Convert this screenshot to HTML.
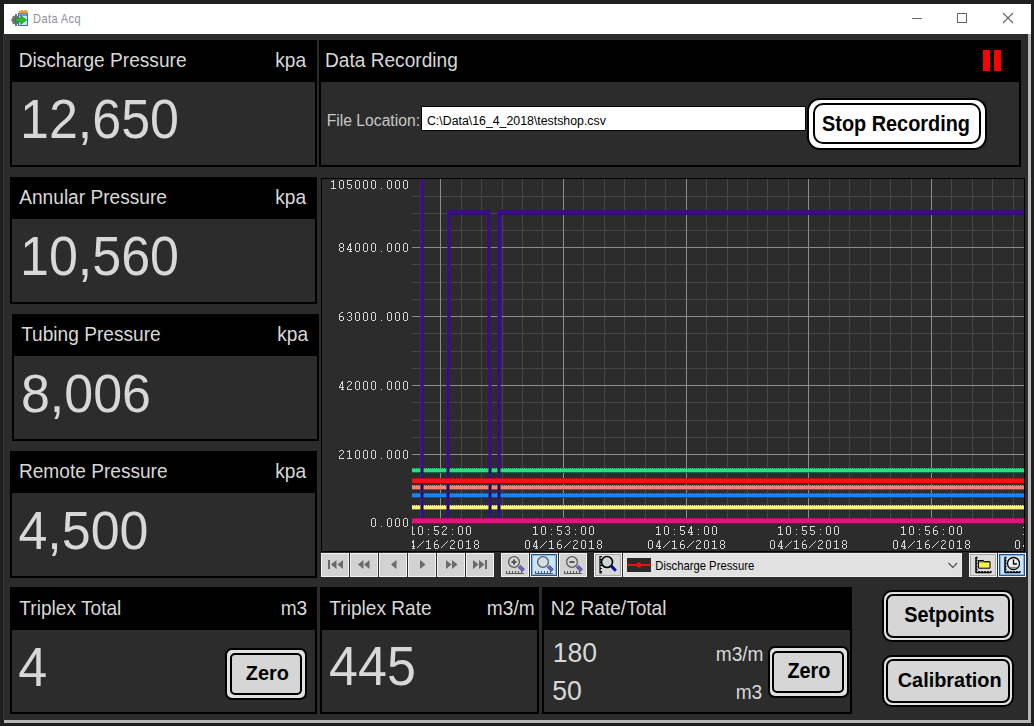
<!DOCTYPE html>
<html><head><meta charset="utf-8"><style>
html,body{margin:0;padding:0;width:1034px;height:726px;overflow:hidden;background:#1f1f1f}
.r{position:absolute;box-sizing:content-box}
.t{position:absolute;white-space:nowrap;font-family:'Liberation Sans', sans-serif}
</style></head><body>
<div class="r" style="left:0px;top:0px;width:1034px;height:726px;background:#1f1f1f;"></div>
<div class="r" style="left:4px;top:4px;width:1027px;height:30px;background:#ffffff;"></div>
<div class="r" style="left:4px;top:34px;width:1024px;height:686px;background:#2b2b2b;"></div>
<div class="r" style="left:1028px;top:34px;width:3px;height:689px;background:#b6b6b6;"></div>
<div class="r" style="left:4px;top:720px;width:1027px;height:3px;background:#b6b6b6;"></div>
<div class="r" style="left:0px;top:0px;width:3px;height:726px;background:#1e1e1e;"></div>
<div class="r" style="left:2px;top:34px;width:1px;height:692px;background:#1a1a1a;"></div>
<div class="r" style="left:3px;top:34px;width:1px;height:686px;background:#373737;"></div>
<div class="t" style="left:33.10px;top:14.09px;font-size:11.000px;line-height:11.000px;color:#8e8e9a;font-weight:normal;font-family:'Liberation Sans', sans-serif;letter-spacing:0.4px;transform:scaleY(1.0800);transform-origin:0 9.314px;">Data Acq</div>
<svg class="r" style="left:0px;top:0px" width="34" height="34" viewBox="0 0 34 34">
<g fill="#727272"><circle cx="16" cy="20" r="4.3"/><rect x="15" y="14" width="2" height="12"/><rect x="11.5" y="19" width="9" height="2"/><path d="M12.2 16.8l1.4-1.4 5.6 5.6-1.4 1.4z M12.2 23.2l1.4 1.4 5.6-5.6-1.4-1.4z"/></g>
<rect x="18.5" y="13.5" width="9" height="12" fill="#c4e4f6" stroke="#3a6cc0" stroke-width="1"/>
<rect x="19" y="14" width="8" height="2" fill="#6a9ad8"/>
<path d="M19 21h8M23 16v9" stroke="#ffffff" stroke-width="0.8"/>
<path d="M19 13.5V11h2v-1h2.2v1h1.3v-1h2.2v1h1v2.5z" fill="#e8a028"/>
<path d="M15.5 18.3h5.3v-2.6l5.7 4.3-5.7 4.3v-2.6h-5.3z" fill="#22c422" stroke="#108010" stroke-width="0.7"/>
</svg>
<div class="r" style="left:912px;top:18px;width:10px;height:1px;background:#666666;"></div>
<div class="r" style="left:957px;top:13px;width:8px;height:8px;border:1px solid #666"></div>
<svg class="r" style="left:1002px;top:12px" width="12" height="12" viewBox="0 0 12 12"><path d="M1 1L11 11M11 1L1 11" stroke="#666" stroke-width="1.1"/></svg>
<div class="r" style="left:10px;top:40px;width:307px;height:127px;background:#000000;"></div>
<div class="r" style="left:12px;top:82px;width:303px;height:83px;background:#2c2c2c;"></div>
<div class="t" style="left:18.73px;top:50.81px;font-size:19.122px;line-height:19.122px;color:#d8d8d8;font-weight:normal;font-family:'Liberation Sans', sans-serif;letter-spacing:0.0px;transform:scaleY(1.0718);transform-origin:0 16.191px;">Discharge Pressure</div>
<div class="t" style="left:275.27px;top:50.81px;font-size:19.122px;line-height:19.122px;color:#d8d8d8;font-weight:normal;font-family:'Liberation Sans', sans-serif;letter-spacing:0.0px;transform:scaleY(1.0104);transform-origin:0 16.191px;">kpa</div>
<div class="t" style="left:20.04px;top:93.99px;font-size:51.981px;line-height:51.981px;color:#d8d8d8;font-weight:normal;font-family:'Liberation Sans', sans-serif;letter-spacing:0.0px;transform:scaleY(1.0765);transform-origin:0 44.013px;">12,650</div>
<div class="r" style="left:10px;top:177px;width:307px;height:127px;background:#000000;"></div>
<div class="r" style="left:12px;top:219px;width:303px;height:83px;background:#2c2c2c;"></div>
<div class="t" style="left:19.26px;top:187.81px;font-size:19.122px;line-height:19.122px;color:#d8d8d8;font-weight:normal;font-family:'Liberation Sans', sans-serif;letter-spacing:0.0px;transform:scaleY(1.0642);transform-origin:0 16.191px;">Annular Pressure</div>
<div class="t" style="left:275.27px;top:187.81px;font-size:19.122px;line-height:19.122px;color:#d8d8d8;font-weight:normal;font-family:'Liberation Sans', sans-serif;letter-spacing:0.0px;transform:scaleY(1.0104);transform-origin:0 16.191px;">kpa</div>
<div class="t" style="left:20.04px;top:230.99px;font-size:51.981px;line-height:51.981px;color:#d8d8d8;font-weight:normal;font-family:'Liberation Sans', sans-serif;letter-spacing:0.0px;transform:scaleY(1.0765);transform-origin:0 44.013px;">10,560</div>
<div class="r" style="left:12px;top:314px;width:307px;height:127px;background:#000000;"></div>
<div class="r" style="left:14px;top:356px;width:303px;height:83px;background:#2c2c2c;"></div>
<div class="t" style="left:21.17px;top:324.81px;font-size:19.122px;line-height:19.122px;color:#d8d8d8;font-weight:normal;font-family:'Liberation Sans', sans-serif;letter-spacing:0.0px;transform:scaleY(1.0642);transform-origin:0 16.191px;">Tubing Pressure</div>
<div class="t" style="left:277.27px;top:324.81px;font-size:19.122px;line-height:19.122px;color:#d8d8d8;font-weight:normal;font-family:'Liberation Sans', sans-serif;letter-spacing:0.0px;transform:scaleY(1.0104);transform-origin:0 16.191px;">kpa</div>
<div class="t" style="left:20.94px;top:367.79px;font-size:51.981px;line-height:51.981px;color:#d8d8d8;font-weight:normal;font-family:'Liberation Sans', sans-serif;letter-spacing:0.0px;transform:scaleY(1.0332);transform-origin:0 44.013px;">8,006</div>
<div class="r" style="left:10px;top:451px;width:307px;height:127px;background:#000000;"></div>
<div class="r" style="left:12px;top:493px;width:303px;height:83px;background:#2c2c2c;"></div>
<div class="t" style="left:18.93px;top:461.81px;font-size:19.122px;line-height:19.122px;color:#d8d8d8;font-weight:normal;font-family:'Liberation Sans', sans-serif;letter-spacing:0.0px;transform:scaleY(1.0642);transform-origin:0 16.191px;">Remote Pressure</div>
<div class="t" style="left:275.27px;top:461.81px;font-size:19.122px;line-height:19.122px;color:#d8d8d8;font-weight:normal;font-family:'Liberation Sans', sans-serif;letter-spacing:0.0px;transform:scaleY(1.0104);transform-origin:0 16.191px;">kpa</div>
<div class="t" style="left:18.41px;top:504.79px;font-size:51.981px;line-height:51.981px;color:#d8d8d8;font-weight:normal;font-family:'Liberation Sans', sans-serif;letter-spacing:0.0px;transform:scaleY(1.0486);transform-origin:0 44.013px;">4,500</div>
<div class="r" style="left:319px;top:40px;width:702px;height:127px;background:#000;"></div>
<div class="r" style="left:321px;top:82px;width:698px;height:83px;background:#2c2c2c;"></div>
<div class="t" style="left:325.03px;top:50.81px;font-size:19.122px;line-height:19.122px;color:#d8d8d8;font-weight:normal;font-family:'Liberation Sans', sans-serif;letter-spacing:0.0px;transform:scaleY(1.0642);transform-origin:0 16.191px;">Data Recording</div>
<div class="r" style="left:983px;top:50px;width:7px;height:21px;background:#ff0000;"></div>
<div class="r" style="left:994px;top:50px;width:7px;height:21px;background:#ff0000;"></div>
<div class="t" style="left:326.71px;top:113.30px;font-size:15.707px;line-height:15.707px;color:#c8c8c8;font-weight:normal;font-family:'Liberation Sans', sans-serif;letter-spacing:0.0px;transform:scaleY(1.1012);transform-origin:0 13.299px;">File Location:</div>
<div class="r" style="left:421px;top:106px;width:385px;height:25px;background:#000000;"></div>
<div class="r" style="left:422px;top:107px;width:383px;height:23px;background:#ffffff;"></div>
<div class="t" style="left:426.97px;top:115.05px;font-size:12.342px;line-height:12.342px;color:#000000;font-weight:normal;font-family:'Liberation Sans', sans-serif;letter-spacing:0.0px;transform:scaleY(1.0560);transform-origin:0 10.450px;">C:\Data\16_4_2018\testshop.csv</div>
<div class="r" style="left:807px;top:98px;width:176px;height:48px;border:2px solid #000;border-radius:13px;background:#ffffff;"></div>
<div class="r" style="left:813px;top:103px;width:164px;height:37px;border:2px solid #000;border-radius:10px;background:#ffffff;"></div>
<div class="t" style="left:822.03px;top:115.36px;font-size:19.895px;line-height:19.895px;color:#000;font-weight:bold;font-family:'Liberation Sans', sans-serif;letter-spacing:0.0px;transform:scaleY(1.0942);transform-origin:0 16.845px;">Stop Recording</div>
<div class="r" style="left:10px;top:587px;width:307px;height:127px;background:#000;"></div>
<div class="r" style="left:12px;top:630px;width:303px;height:82px;background:#2c2c2c;"></div>
<div class="t" style="left:19.37px;top:598.51px;font-size:19.122px;line-height:19.122px;color:#d8d8d8;font-weight:normal;font-family:'Liberation Sans', sans-serif;letter-spacing:0.0px;transform:scaleY(1.0109);transform-origin:0 16.191px;">Triplex Total</div>
<div class="t" style="left:280.68px;top:598.81px;font-size:19.122px;line-height:19.122px;color:#d8d8d8;font-weight:normal;font-family:'Liberation Sans', sans-serif;letter-spacing:0.0px;transform:scaleY(1.0261);transform-origin:0 16.191px;">m3</div>
<div class="t" style="left:18.21px;top:641.79px;font-size:51.981px;line-height:51.981px;color:#d8d8d8;font-weight:normal;font-family:'Liberation Sans', sans-serif;letter-spacing:0.0px;transform:scaleY(1.0682);transform-origin:0 44.013px;">4</div>
<div class="r" style="left:225px;top:648px;width:78px;height:48px;border:2px solid #000;border-radius:7px;background:#e0e0e0;"></div>
<div class="r" style="left:230px;top:653px;width:68px;height:38px;border:2px solid #000;border-radius:5px;background:#d6d6d6;"></div>
<div class="t" style="left:245.81px;top:663.86px;font-size:19.895px;line-height:19.895px;color:#000;font-weight:bold;font-family:'Liberation Sans', sans-serif;letter-spacing:0.0px;transform:scaleY(1.0448);transform-origin:0 16.845px;">Zero</div>
<div class="r" style="left:320px;top:587px;width:219px;height:127px;background:#000;"></div>
<div class="r" style="left:322px;top:630px;width:215px;height:82px;background:#2c2c2c;"></div>
<div class="t" style="left:329.37px;top:598.51px;font-size:19.122px;line-height:19.122px;color:#d8d8d8;font-weight:normal;font-family:'Liberation Sans', sans-serif;letter-spacing:0.0px;transform:scaleY(1.0109);transform-origin:0 16.191px;">Triplex Rate</div>
<div class="t" style="left:486.85px;top:598.81px;font-size:19.122px;line-height:19.122px;color:#d8d8d8;font-weight:normal;font-family:'Liberation Sans', sans-serif;letter-spacing:0.0px;transform:scaleY(1.0335);transform-origin:0 16.191px;">m3/m</div>
<div class="t" style="left:329.11px;top:640.99px;font-size:51.981px;line-height:51.981px;color:#d8d8d8;font-weight:normal;font-family:'Liberation Sans', sans-serif;letter-spacing:0.0px;transform:scaleY(1.0682);transform-origin:0 44.013px;">445</div>
<div class="r" style="left:542px;top:587px;width:310px;height:127px;background:#000;"></div>
<div class="r" style="left:544px;top:630px;width:306px;height:82px;background:#2c2c2c;"></div>
<div class="t" style="left:550.73px;top:598.51px;font-size:19.122px;line-height:19.122px;color:#d8d8d8;font-weight:normal;font-family:'Liberation Sans', sans-serif;letter-spacing:0.0px;transform:scaleY(1.0109);transform-origin:0 16.191px;">N2 Rate/Total</div>
<div class="t" style="left:552.77px;top:640.39px;font-size:26.590px;line-height:26.590px;color:#d8d8d8;font-weight:normal;font-family:'Liberation Sans', sans-serif;letter-spacing:0.0px;transform:scaleY(1.0714);transform-origin:0 22.514px;">180</div>
<div class="t" style="left:552.24px;top:677.79px;font-size:26.590px;line-height:26.590px;color:#d8d8d8;font-weight:normal;font-family:'Liberation Sans', sans-serif;letter-spacing:0.0px;transform:scaleY(1.0496);transform-origin:0 22.514px;">50</div>
<div class="t" style="left:715.75px;top:644.81px;font-size:19.122px;line-height:19.122px;color:#d8d8d8;font-weight:normal;font-family:'Liberation Sans', sans-serif;letter-spacing:0.0px;transform:scaleY(1.0710);transform-origin:0 16.191px;">m3/m</div>
<div class="t" style="left:735.68px;top:682.91px;font-size:19.122px;line-height:19.122px;color:#d8d8d8;font-weight:normal;font-family:'Liberation Sans', sans-serif;letter-spacing:0.0px;transform:scaleY(1.0710);transform-origin:0 16.191px;">m3</div>
<div class="r" style="left:768px;top:646px;width:77px;height:48px;border:2px solid #000;border-radius:7px;background:#e0e0e0;"></div>
<div class="r" style="left:772px;top:651px;width:68px;height:38px;border:2px solid #000;border-radius:5px;background:#d6d6d6;"></div>
<div class="t" style="left:787.41px;top:662.36px;font-size:19.895px;line-height:19.895px;color:#000;font-weight:bold;font-family:'Liberation Sans', sans-serif;letter-spacing:0.0px;transform:scaleY(1.0813);transform-origin:0 16.845px;">Zero</div>
<div class="r" style="left:882px;top:590px;width:128px;height:48px;border:2px solid #000;border-radius:10px;background:#e0e0e0;"></div>
<div class="r" style="left:886px;top:594px;width:120px;height:40px;border:2px solid #000;border-radius:7px;background:#d6d6d6;"></div>
<div class="t" style="left:904.13px;top:606.36px;font-size:19.895px;line-height:19.895px;color:#000;font-weight:bold;font-family:'Liberation Sans', sans-serif;letter-spacing:0.0px;transform:scaleY(1.0726);transform-origin:0 16.845px;">Setpoints</div>
<div class="r" style="left:882px;top:655px;width:128px;height:48px;border:2px solid #000;border-radius:10px;background:#e0e0e0;"></div>
<div class="r" style="left:886px;top:659px;width:120px;height:40px;border:2px solid #000;border-radius:7px;background:#d6d6d6;"></div>
<div class="t" style="left:897.78px;top:671.36px;font-size:19.895px;line-height:19.895px;color:#000;font-weight:bold;font-family:'Liberation Sans', sans-serif;letter-spacing:0.0px;transform:scaleY(1.0510);transform-origin:0 16.845px;">Calibration</div>
<svg class="r" style="left:321px;top:178px" width="704" height="374" viewBox="321 178 704 374" shape-rendering="crispEdges"><rect x="321" y="178" width="704" height="374" fill="#000"/><rect x="322" y="179" width="702" height="372" fill="#2c2c2c"/><rect x="412" y="196" width="612" height="1" fill="#464646"/><rect x="412" y="213" width="612" height="1" fill="#464646"/><rect x="412" y="230" width="612" height="1" fill="#464646"/><rect x="412" y="264" width="612" height="1" fill="#464646"/><rect x="412" y="282" width="612" height="1" fill="#464646"/><rect x="412" y="299" width="612" height="1" fill="#464646"/><rect x="412" y="333" width="612" height="1" fill="#464646"/><rect x="412" y="351" width="612" height="1" fill="#464646"/><rect x="412" y="368" width="612" height="1" fill="#464646"/><rect x="412" y="402" width="612" height="1" fill="#464646"/><rect x="412" y="420" width="612" height="1" fill="#464646"/><rect x="412" y="437" width="612" height="1" fill="#464646"/><rect x="412" y="471" width="612" height="1" fill="#464646"/><rect x="412" y="489" width="612" height="1" fill="#464646"/><rect x="412" y="506" width="612" height="1" fill="#464646"/><rect x="420" y="179" width="1" height="340" fill="#464646"/><rect x="461" y="179" width="1" height="340" fill="#464646"/><rect x="481" y="179" width="1" height="340" fill="#464646"/><rect x="502" y="179" width="1" height="340" fill="#464646"/><rect x="522" y="179" width="1" height="340" fill="#464646"/><rect x="542" y="179" width="1" height="340" fill="#464646"/><rect x="583" y="179" width="1" height="340" fill="#464646"/><rect x="604" y="179" width="1" height="340" fill="#464646"/><rect x="624" y="179" width="1" height="340" fill="#464646"/><rect x="645" y="179" width="1" height="340" fill="#464646"/><rect x="665" y="179" width="1" height="340" fill="#464646"/><rect x="706" y="179" width="1" height="340" fill="#464646"/><rect x="727" y="179" width="1" height="340" fill="#464646"/><rect x="747" y="179" width="1" height="340" fill="#464646"/><rect x="767" y="179" width="1" height="340" fill="#464646"/><rect x="788" y="179" width="1" height="340" fill="#464646"/><rect x="829" y="179" width="1" height="340" fill="#464646"/><rect x="849" y="179" width="1" height="340" fill="#464646"/><rect x="870" y="179" width="1" height="340" fill="#464646"/><rect x="890" y="179" width="1" height="340" fill="#464646"/><rect x="911" y="179" width="1" height="340" fill="#464646"/><rect x="951" y="179" width="1" height="340" fill="#464646"/><rect x="972" y="179" width="1" height="340" fill="#464646"/><rect x="992" y="179" width="1" height="340" fill="#464646"/><rect x="1013" y="179" width="1" height="340" fill="#464646"/><rect x="412" y="247" width="612" height="1" fill="#8c8c8c"/><rect x="412" y="316" width="612" height="1" fill="#8c8c8c"/><rect x="412" y="385" width="612" height="1" fill="#8c8c8c"/><rect x="412" y="454" width="612" height="1" fill="#8c8c8c"/><rect x="440" y="179" width="1" height="340" fill="#8c8c8c"/><rect x="563" y="179" width="1" height="340" fill="#8c8c8c"/><rect x="686" y="179" width="1" height="340" fill="#8c8c8c"/><rect x="808" y="179" width="1" height="340" fill="#8c8c8c"/><rect x="931" y="179" width="1" height="340" fill="#8c8c8c"/><defs><pattern id="dot_22e282" x="0" y="0" width="2" height="1" patternUnits="userSpaceOnUse"><rect x="0" y="0" width="1" height="1" fill="#22e282"/><rect x="1" y="0" width="1" height="1" fill="#186a44"/></pattern><pattern id="dot_f01414" x="0" y="0" width="2" height="1" patternUnits="userSpaceOnUse"><rect x="0" y="0" width="1" height="1" fill="#f01414"/><rect x="1" y="0" width="1" height="1" fill="#7a1010"/></pattern><pattern id="dot_f4827c" x="0" y="0" width="2" height="1" patternUnits="userSpaceOnUse"><rect x="0" y="0" width="1" height="1" fill="#f4827c"/><rect x="1" y="0" width="1" height="1" fill="#7a4a46"/></pattern><pattern id="dot_1a84f6" x="0" y="0" width="2" height="1" patternUnits="userSpaceOnUse"><rect x="0" y="0" width="1" height="1" fill="#1a84f6"/><rect x="1" y="0" width="1" height="1" fill="#1a4a7a"/></pattern><pattern id="dot_f8f282" x="0" y="0" width="2" height="1" patternUnits="userSpaceOnUse"><rect x="0" y="0" width="1" height="1" fill="#f8f282"/><rect x="1" y="0" width="1" height="1" fill="#7a7848"/></pattern><pattern id="dot_e4127c" x="0" y="0" width="2" height="1" patternUnits="userSpaceOnUse"><rect x="0" y="0" width="1" height="1" fill="#e4127c"/><rect x="1" y="0" width="1" height="1" fill="#7a1246"/></pattern><pattern id="dot_3c0c8c" x="0" y="0" width="2" height="1" patternUnits="userSpaceOnUse"><rect x="0" y="0" width="1" height="1" fill="#3c0c8c"/><rect x="1" y="0" width="1" height="1" fill="#2a1060"/></pattern></defs><rect x="412" y="468" width="612" height="1" fill="url(#dot_22e282)"/><rect x="412" y="469" width="612" height="3" fill="#22e282"/><rect x="412" y="472" width="612" height="1" fill="#186a44"/><rect x="412" y="485" width="612" height="1" fill="url(#dot_f4827c)"/><rect x="412" y="486" width="612" height="3" fill="#f4827c"/><rect x="412" y="489" width="612" height="1" fill="#7a4a46"/><rect x="412" y="493" width="612" height="1" fill="url(#dot_1a84f6)"/><rect x="412" y="494" width="612" height="3" fill="#1a84f6"/><rect x="412" y="497" width="612" height="1" fill="#1a4a7a"/><rect x="412" y="505" width="612" height="1" fill="url(#dot_f8f282)"/><rect x="412" y="506" width="612" height="3" fill="#f8f282"/><rect x="412" y="509" width="612" height="1" fill="#7a7848"/><rect x="420" y="179" width="4" height="189" fill="#3c0c8c" fill-opacity="0.55"/><rect x="421" y="179" width="2" height="189" fill="#3c0c8c"/><rect x="420" y="368" width="4" height="151" fill="#3c0c8c" fill-opacity="0.55"/><rect x="421" y="368" width="2" height="151" fill="#3c0c8c"/><rect x="421" y="468" width="2" height="5" fill="#12163a"/><rect x="421" y="485" width="2" height="5" fill="#12163a"/><rect x="421" y="493" width="2" height="5" fill="#12163a"/><rect x="421" y="505" width="2" height="5" fill="#12163a"/><rect x="447" y="211" width="4" height="157" fill="#3c0c8c" fill-opacity="0.55"/><rect x="448" y="211" width="2" height="157" fill="#3c0c8c"/><rect x="446" y="368" width="4" height="151" fill="#3c0c8c" fill-opacity="0.55"/><rect x="447" y="368" width="2" height="151" fill="#3c0c8c"/><rect x="447" y="468" width="2" height="5" fill="#12163a"/><rect x="447" y="485" width="2" height="5" fill="#12163a"/><rect x="447" y="493" width="2" height="5" fill="#12163a"/><rect x="447" y="505" width="2" height="5" fill="#12163a"/><rect x="487" y="211" width="4" height="157" fill="#3c0c8c" fill-opacity="0.55"/><rect x="488" y="211" width="2" height="157" fill="#3c0c8c"/><rect x="488" y="368" width="4" height="151" fill="#3c0c8c" fill-opacity="0.55"/><rect x="489" y="368" width="2" height="151" fill="#3c0c8c"/><rect x="489" y="468" width="2" height="5" fill="#12163a"/><rect x="489" y="485" width="2" height="5" fill="#12163a"/><rect x="489" y="493" width="2" height="5" fill="#12163a"/><rect x="489" y="505" width="2" height="5" fill="#12163a"/><rect x="497" y="211" width="5" height="157" fill="#3c0c8c" fill-opacity="0.55"/><rect x="498" y="211" width="3" height="157" fill="#3c0c8c"/><rect x="497" y="368" width="4" height="151" fill="#3c0c8c" fill-opacity="0.55"/><rect x="498" y="368" width="2" height="151" fill="#3c0c8c"/><rect x="498" y="468" width="2" height="5" fill="#12163a"/><rect x="498" y="485" width="2" height="5" fill="#12163a"/><rect x="498" y="493" width="2" height="5" fill="#12163a"/><rect x="498" y="505" width="2" height="5" fill="#12163a"/><rect x="448" y="210" width="42" height="1" fill="url(#dot_3c0c8c)"/><rect x="448" y="211" width="42" height="3" fill="#3c0c8c"/><rect x="448" y="214" width="42" height="1" fill="#2a1060"/><rect x="498" y="210" width="526" height="1" fill="url(#dot_3c0c8c)"/><rect x="498" y="211" width="526" height="3" fill="#3c0c8c"/><rect x="498" y="214" width="526" height="1" fill="#2a1060"/><rect x="412" y="478" width="612" height="1" fill="url(#dot_f01414)"/><rect x="412" y="479" width="612" height="4" fill="#f01414"/><rect x="412" y="483" width="612" height="1" fill="#7a1010"/><rect x="412" y="518" width="612" height="1" fill="url(#dot_e4127c)"/><rect x="412" y="519" width="612" height="4" fill="#e4127c"/><rect x="412" y="523" width="612" height="1" fill="#7a1246"/></svg>
<svg class="r" style="left:0;top:0" width="1034" height="726" viewBox="0 0 1034 726" shape-rendering="crispEdges"><path d="M333 180h1v1h-1zM331 181h1v1h-1zM332 181h1v1h-1zM333 181h1v1h-1zM333 182h1v1h-1zM333 183h1v1h-1zM333 184h1v1h-1zM333 185h1v1h-1zM333 186h1v1h-1zM333 187h1v1h-1zM331 188h1v1h-1zM332 188h1v1h-1zM333 188h1v1h-1zM334 188h1v1h-1zM335 188h1v1h-1zM340 180h1v1h-1zM341 180h1v1h-1zM342 180h1v1h-1zM339 181h1v1h-1zM343 181h1v1h-1zM339 182h1v1h-1zM343 182h1v1h-1zM339 183h1v1h-1zM343 183h1v1h-1zM339 184h1v1h-1zM343 184h1v1h-1zM339 185h1v1h-1zM343 185h1v1h-1zM339 186h1v1h-1zM343 186h1v1h-1zM339 187h1v1h-1zM343 187h1v1h-1zM340 188h1v1h-1zM341 188h1v1h-1zM342 188h1v1h-1zM347 180h1v1h-1zM348 180h1v1h-1zM349 180h1v1h-1zM350 180h1v1h-1zM351 180h1v1h-1zM347 181h1v1h-1zM347 182h1v1h-1zM347 183h1v1h-1zM347 184h1v1h-1zM348 184h1v1h-1zM349 184h1v1h-1zM350 184h1v1h-1zM351 185h1v1h-1zM351 186h1v1h-1zM347 187h1v1h-1zM351 187h1v1h-1zM348 188h1v1h-1zM349 188h1v1h-1zM350 188h1v1h-1zM356 180h1v1h-1zM357 180h1v1h-1zM358 180h1v1h-1zM355 181h1v1h-1zM359 181h1v1h-1zM355 182h1v1h-1zM359 182h1v1h-1zM355 183h1v1h-1zM359 183h1v1h-1zM355 184h1v1h-1zM359 184h1v1h-1zM355 185h1v1h-1zM359 185h1v1h-1zM355 186h1v1h-1zM359 186h1v1h-1zM355 187h1v1h-1zM359 187h1v1h-1zM356 188h1v1h-1zM357 188h1v1h-1zM358 188h1v1h-1zM364 180h1v1h-1zM365 180h1v1h-1zM366 180h1v1h-1zM363 181h1v1h-1zM367 181h1v1h-1zM363 182h1v1h-1zM367 182h1v1h-1zM363 183h1v1h-1zM367 183h1v1h-1zM363 184h1v1h-1zM367 184h1v1h-1zM363 185h1v1h-1zM367 185h1v1h-1zM363 186h1v1h-1zM367 186h1v1h-1zM363 187h1v1h-1zM367 187h1v1h-1zM364 188h1v1h-1zM365 188h1v1h-1zM366 188h1v1h-1zM372 180h1v1h-1zM373 180h1v1h-1zM374 180h1v1h-1zM371 181h1v1h-1zM375 181h1v1h-1zM371 182h1v1h-1zM375 182h1v1h-1zM371 183h1v1h-1zM375 183h1v1h-1zM371 184h1v1h-1zM375 184h1v1h-1zM371 185h1v1h-1zM375 185h1v1h-1zM371 186h1v1h-1zM375 186h1v1h-1zM371 187h1v1h-1zM375 187h1v1h-1zM372 188h1v1h-1zM373 188h1v1h-1zM374 188h1v1h-1zM381 188h1v1h-1zM388 180h1v1h-1zM389 180h1v1h-1zM390 180h1v1h-1zM387 181h1v1h-1zM391 181h1v1h-1zM387 182h1v1h-1zM391 182h1v1h-1zM387 183h1v1h-1zM391 183h1v1h-1zM387 184h1v1h-1zM391 184h1v1h-1zM387 185h1v1h-1zM391 185h1v1h-1zM387 186h1v1h-1zM391 186h1v1h-1zM387 187h1v1h-1zM391 187h1v1h-1zM388 188h1v1h-1zM389 188h1v1h-1zM390 188h1v1h-1zM396 180h1v1h-1zM397 180h1v1h-1zM398 180h1v1h-1zM395 181h1v1h-1zM399 181h1v1h-1zM395 182h1v1h-1zM399 182h1v1h-1zM395 183h1v1h-1zM399 183h1v1h-1zM395 184h1v1h-1zM399 184h1v1h-1zM395 185h1v1h-1zM399 185h1v1h-1zM395 186h1v1h-1zM399 186h1v1h-1zM395 187h1v1h-1zM399 187h1v1h-1zM396 188h1v1h-1zM397 188h1v1h-1zM398 188h1v1h-1zM404 180h1v1h-1zM405 180h1v1h-1zM406 180h1v1h-1zM403 181h1v1h-1zM407 181h1v1h-1zM403 182h1v1h-1zM407 182h1v1h-1zM403 183h1v1h-1zM407 183h1v1h-1zM403 184h1v1h-1zM407 184h1v1h-1zM403 185h1v1h-1zM407 185h1v1h-1zM403 186h1v1h-1zM407 186h1v1h-1zM403 187h1v1h-1zM407 187h1v1h-1zM404 188h1v1h-1zM405 188h1v1h-1zM406 188h1v1h-1zM340 243h1v1h-1zM341 243h1v1h-1zM342 243h1v1h-1zM339 244h1v1h-1zM343 244h1v1h-1zM339 245h1v1h-1zM343 245h1v1h-1zM339 246h1v1h-1zM343 246h1v1h-1zM340 247h1v1h-1zM341 247h1v1h-1zM342 247h1v1h-1zM339 248h1v1h-1zM343 248h1v1h-1zM339 249h1v1h-1zM343 249h1v1h-1zM339 250h1v1h-1zM343 250h1v1h-1zM340 251h1v1h-1zM341 251h1v1h-1zM342 251h1v1h-1zM350 243h1v1h-1zM349 244h1v1h-1zM350 244h1v1h-1zM349 245h1v1h-1zM350 245h1v1h-1zM348 246h1v1h-1zM350 246h1v1h-1zM348 247h1v1h-1zM350 247h1v1h-1zM347 248h1v1h-1zM350 248h1v1h-1zM347 249h1v1h-1zM348 249h1v1h-1zM349 249h1v1h-1zM350 249h1v1h-1zM351 249h1v1h-1zM350 250h1v1h-1zM349 251h1v1h-1zM350 251h1v1h-1zM351 251h1v1h-1zM356 243h1v1h-1zM357 243h1v1h-1zM358 243h1v1h-1zM355 244h1v1h-1zM359 244h1v1h-1zM355 245h1v1h-1zM359 245h1v1h-1zM355 246h1v1h-1zM359 246h1v1h-1zM355 247h1v1h-1zM359 247h1v1h-1zM355 248h1v1h-1zM359 248h1v1h-1zM355 249h1v1h-1zM359 249h1v1h-1zM355 250h1v1h-1zM359 250h1v1h-1zM356 251h1v1h-1zM357 251h1v1h-1zM358 251h1v1h-1zM364 243h1v1h-1zM365 243h1v1h-1zM366 243h1v1h-1zM363 244h1v1h-1zM367 244h1v1h-1zM363 245h1v1h-1zM367 245h1v1h-1zM363 246h1v1h-1zM367 246h1v1h-1zM363 247h1v1h-1zM367 247h1v1h-1zM363 248h1v1h-1zM367 248h1v1h-1zM363 249h1v1h-1zM367 249h1v1h-1zM363 250h1v1h-1zM367 250h1v1h-1zM364 251h1v1h-1zM365 251h1v1h-1zM366 251h1v1h-1zM372 243h1v1h-1zM373 243h1v1h-1zM374 243h1v1h-1zM371 244h1v1h-1zM375 244h1v1h-1zM371 245h1v1h-1zM375 245h1v1h-1zM371 246h1v1h-1zM375 246h1v1h-1zM371 247h1v1h-1zM375 247h1v1h-1zM371 248h1v1h-1zM375 248h1v1h-1zM371 249h1v1h-1zM375 249h1v1h-1zM371 250h1v1h-1zM375 250h1v1h-1zM372 251h1v1h-1zM373 251h1v1h-1zM374 251h1v1h-1zM381 251h1v1h-1zM388 243h1v1h-1zM389 243h1v1h-1zM390 243h1v1h-1zM387 244h1v1h-1zM391 244h1v1h-1zM387 245h1v1h-1zM391 245h1v1h-1zM387 246h1v1h-1zM391 246h1v1h-1zM387 247h1v1h-1zM391 247h1v1h-1zM387 248h1v1h-1zM391 248h1v1h-1zM387 249h1v1h-1zM391 249h1v1h-1zM387 250h1v1h-1zM391 250h1v1h-1zM388 251h1v1h-1zM389 251h1v1h-1zM390 251h1v1h-1zM396 243h1v1h-1zM397 243h1v1h-1zM398 243h1v1h-1zM395 244h1v1h-1zM399 244h1v1h-1zM395 245h1v1h-1zM399 245h1v1h-1zM395 246h1v1h-1zM399 246h1v1h-1zM395 247h1v1h-1zM399 247h1v1h-1zM395 248h1v1h-1zM399 248h1v1h-1zM395 249h1v1h-1zM399 249h1v1h-1zM395 250h1v1h-1zM399 250h1v1h-1zM396 251h1v1h-1zM397 251h1v1h-1zM398 251h1v1h-1zM404 243h1v1h-1zM405 243h1v1h-1zM406 243h1v1h-1zM403 244h1v1h-1zM407 244h1v1h-1zM403 245h1v1h-1zM407 245h1v1h-1zM403 246h1v1h-1zM407 246h1v1h-1zM403 247h1v1h-1zM407 247h1v1h-1zM403 248h1v1h-1zM407 248h1v1h-1zM403 249h1v1h-1zM407 249h1v1h-1zM403 250h1v1h-1zM407 250h1v1h-1zM404 251h1v1h-1zM405 251h1v1h-1zM406 251h1v1h-1zM341 312h1v1h-1zM342 312h1v1h-1zM340 313h1v1h-1zM339 314h1v1h-1zM339 315h1v1h-1zM339 316h1v1h-1zM340 316h1v1h-1zM341 316h1v1h-1zM342 316h1v1h-1zM339 317h1v1h-1zM343 317h1v1h-1zM339 318h1v1h-1zM343 318h1v1h-1zM339 319h1v1h-1zM343 319h1v1h-1zM340 320h1v1h-1zM341 320h1v1h-1zM342 320h1v1h-1zM348 312h1v1h-1zM349 312h1v1h-1zM350 312h1v1h-1zM347 313h1v1h-1zM351 313h1v1h-1zM351 314h1v1h-1zM351 315h1v1h-1zM349 316h1v1h-1zM350 316h1v1h-1zM351 317h1v1h-1zM351 318h1v1h-1zM347 319h1v1h-1zM351 319h1v1h-1zM348 320h1v1h-1zM349 320h1v1h-1zM350 320h1v1h-1zM356 312h1v1h-1zM357 312h1v1h-1zM358 312h1v1h-1zM355 313h1v1h-1zM359 313h1v1h-1zM355 314h1v1h-1zM359 314h1v1h-1zM355 315h1v1h-1zM359 315h1v1h-1zM355 316h1v1h-1zM359 316h1v1h-1zM355 317h1v1h-1zM359 317h1v1h-1zM355 318h1v1h-1zM359 318h1v1h-1zM355 319h1v1h-1zM359 319h1v1h-1zM356 320h1v1h-1zM357 320h1v1h-1zM358 320h1v1h-1zM364 312h1v1h-1zM365 312h1v1h-1zM366 312h1v1h-1zM363 313h1v1h-1zM367 313h1v1h-1zM363 314h1v1h-1zM367 314h1v1h-1zM363 315h1v1h-1zM367 315h1v1h-1zM363 316h1v1h-1zM367 316h1v1h-1zM363 317h1v1h-1zM367 317h1v1h-1zM363 318h1v1h-1zM367 318h1v1h-1zM363 319h1v1h-1zM367 319h1v1h-1zM364 320h1v1h-1zM365 320h1v1h-1zM366 320h1v1h-1zM372 312h1v1h-1zM373 312h1v1h-1zM374 312h1v1h-1zM371 313h1v1h-1zM375 313h1v1h-1zM371 314h1v1h-1zM375 314h1v1h-1zM371 315h1v1h-1zM375 315h1v1h-1zM371 316h1v1h-1zM375 316h1v1h-1zM371 317h1v1h-1zM375 317h1v1h-1zM371 318h1v1h-1zM375 318h1v1h-1zM371 319h1v1h-1zM375 319h1v1h-1zM372 320h1v1h-1zM373 320h1v1h-1zM374 320h1v1h-1zM381 320h1v1h-1zM388 312h1v1h-1zM389 312h1v1h-1zM390 312h1v1h-1zM387 313h1v1h-1zM391 313h1v1h-1zM387 314h1v1h-1zM391 314h1v1h-1zM387 315h1v1h-1zM391 315h1v1h-1zM387 316h1v1h-1zM391 316h1v1h-1zM387 317h1v1h-1zM391 317h1v1h-1zM387 318h1v1h-1zM391 318h1v1h-1zM387 319h1v1h-1zM391 319h1v1h-1zM388 320h1v1h-1zM389 320h1v1h-1zM390 320h1v1h-1zM396 312h1v1h-1zM397 312h1v1h-1zM398 312h1v1h-1zM395 313h1v1h-1zM399 313h1v1h-1zM395 314h1v1h-1zM399 314h1v1h-1zM395 315h1v1h-1zM399 315h1v1h-1zM395 316h1v1h-1zM399 316h1v1h-1zM395 317h1v1h-1zM399 317h1v1h-1zM395 318h1v1h-1zM399 318h1v1h-1zM395 319h1v1h-1zM399 319h1v1h-1zM396 320h1v1h-1zM397 320h1v1h-1zM398 320h1v1h-1zM404 312h1v1h-1zM405 312h1v1h-1zM406 312h1v1h-1zM403 313h1v1h-1zM407 313h1v1h-1zM403 314h1v1h-1zM407 314h1v1h-1zM403 315h1v1h-1zM407 315h1v1h-1zM403 316h1v1h-1zM407 316h1v1h-1zM403 317h1v1h-1zM407 317h1v1h-1zM403 318h1v1h-1zM407 318h1v1h-1zM403 319h1v1h-1zM407 319h1v1h-1zM404 320h1v1h-1zM405 320h1v1h-1zM406 320h1v1h-1zM342 381h1v1h-1zM341 382h1v1h-1zM342 382h1v1h-1zM341 383h1v1h-1zM342 383h1v1h-1zM340 384h1v1h-1zM342 384h1v1h-1zM340 385h1v1h-1zM342 385h1v1h-1zM339 386h1v1h-1zM342 386h1v1h-1zM339 387h1v1h-1zM340 387h1v1h-1zM341 387h1v1h-1zM342 387h1v1h-1zM343 387h1v1h-1zM342 388h1v1h-1zM341 389h1v1h-1zM342 389h1v1h-1zM343 389h1v1h-1zM348 381h1v1h-1zM349 381h1v1h-1zM350 381h1v1h-1zM347 382h1v1h-1zM351 382h1v1h-1zM351 383h1v1h-1zM350 384h1v1h-1zM349 385h1v1h-1zM348 386h1v1h-1zM347 387h1v1h-1zM347 388h1v1h-1zM347 389h1v1h-1zM348 389h1v1h-1zM349 389h1v1h-1zM350 389h1v1h-1zM351 389h1v1h-1zM356 381h1v1h-1zM357 381h1v1h-1zM358 381h1v1h-1zM355 382h1v1h-1zM359 382h1v1h-1zM355 383h1v1h-1zM359 383h1v1h-1zM355 384h1v1h-1zM359 384h1v1h-1zM355 385h1v1h-1zM359 385h1v1h-1zM355 386h1v1h-1zM359 386h1v1h-1zM355 387h1v1h-1zM359 387h1v1h-1zM355 388h1v1h-1zM359 388h1v1h-1zM356 389h1v1h-1zM357 389h1v1h-1zM358 389h1v1h-1zM364 381h1v1h-1zM365 381h1v1h-1zM366 381h1v1h-1zM363 382h1v1h-1zM367 382h1v1h-1zM363 383h1v1h-1zM367 383h1v1h-1zM363 384h1v1h-1zM367 384h1v1h-1zM363 385h1v1h-1zM367 385h1v1h-1zM363 386h1v1h-1zM367 386h1v1h-1zM363 387h1v1h-1zM367 387h1v1h-1zM363 388h1v1h-1zM367 388h1v1h-1zM364 389h1v1h-1zM365 389h1v1h-1zM366 389h1v1h-1zM372 381h1v1h-1zM373 381h1v1h-1zM374 381h1v1h-1zM371 382h1v1h-1zM375 382h1v1h-1zM371 383h1v1h-1zM375 383h1v1h-1zM371 384h1v1h-1zM375 384h1v1h-1zM371 385h1v1h-1zM375 385h1v1h-1zM371 386h1v1h-1zM375 386h1v1h-1zM371 387h1v1h-1zM375 387h1v1h-1zM371 388h1v1h-1zM375 388h1v1h-1zM372 389h1v1h-1zM373 389h1v1h-1zM374 389h1v1h-1zM381 389h1v1h-1zM388 381h1v1h-1zM389 381h1v1h-1zM390 381h1v1h-1zM387 382h1v1h-1zM391 382h1v1h-1zM387 383h1v1h-1zM391 383h1v1h-1zM387 384h1v1h-1zM391 384h1v1h-1zM387 385h1v1h-1zM391 385h1v1h-1zM387 386h1v1h-1zM391 386h1v1h-1zM387 387h1v1h-1zM391 387h1v1h-1zM387 388h1v1h-1zM391 388h1v1h-1zM388 389h1v1h-1zM389 389h1v1h-1zM390 389h1v1h-1zM396 381h1v1h-1zM397 381h1v1h-1zM398 381h1v1h-1zM395 382h1v1h-1zM399 382h1v1h-1zM395 383h1v1h-1zM399 383h1v1h-1zM395 384h1v1h-1zM399 384h1v1h-1zM395 385h1v1h-1zM399 385h1v1h-1zM395 386h1v1h-1zM399 386h1v1h-1zM395 387h1v1h-1zM399 387h1v1h-1zM395 388h1v1h-1zM399 388h1v1h-1zM396 389h1v1h-1zM397 389h1v1h-1zM398 389h1v1h-1zM404 381h1v1h-1zM405 381h1v1h-1zM406 381h1v1h-1zM403 382h1v1h-1zM407 382h1v1h-1zM403 383h1v1h-1zM407 383h1v1h-1zM403 384h1v1h-1zM407 384h1v1h-1zM403 385h1v1h-1zM407 385h1v1h-1zM403 386h1v1h-1zM407 386h1v1h-1zM403 387h1v1h-1zM407 387h1v1h-1zM403 388h1v1h-1zM407 388h1v1h-1zM404 389h1v1h-1zM405 389h1v1h-1zM406 389h1v1h-1zM340 450h1v1h-1zM341 450h1v1h-1zM342 450h1v1h-1zM339 451h1v1h-1zM343 451h1v1h-1zM343 452h1v1h-1zM342 453h1v1h-1zM341 454h1v1h-1zM340 455h1v1h-1zM339 456h1v1h-1zM339 457h1v1h-1zM339 458h1v1h-1zM340 458h1v1h-1zM341 458h1v1h-1zM342 458h1v1h-1zM343 458h1v1h-1zM349 450h1v1h-1zM347 451h1v1h-1zM348 451h1v1h-1zM349 451h1v1h-1zM349 452h1v1h-1zM349 453h1v1h-1zM349 454h1v1h-1zM349 455h1v1h-1zM349 456h1v1h-1zM349 457h1v1h-1zM347 458h1v1h-1zM348 458h1v1h-1zM349 458h1v1h-1zM350 458h1v1h-1zM351 458h1v1h-1zM356 450h1v1h-1zM357 450h1v1h-1zM358 450h1v1h-1zM355 451h1v1h-1zM359 451h1v1h-1zM355 452h1v1h-1zM359 452h1v1h-1zM355 453h1v1h-1zM359 453h1v1h-1zM355 454h1v1h-1zM359 454h1v1h-1zM355 455h1v1h-1zM359 455h1v1h-1zM355 456h1v1h-1zM359 456h1v1h-1zM355 457h1v1h-1zM359 457h1v1h-1zM356 458h1v1h-1zM357 458h1v1h-1zM358 458h1v1h-1zM364 450h1v1h-1zM365 450h1v1h-1zM366 450h1v1h-1zM363 451h1v1h-1zM367 451h1v1h-1zM363 452h1v1h-1zM367 452h1v1h-1zM363 453h1v1h-1zM367 453h1v1h-1zM363 454h1v1h-1zM367 454h1v1h-1zM363 455h1v1h-1zM367 455h1v1h-1zM363 456h1v1h-1zM367 456h1v1h-1zM363 457h1v1h-1zM367 457h1v1h-1zM364 458h1v1h-1zM365 458h1v1h-1zM366 458h1v1h-1zM372 450h1v1h-1zM373 450h1v1h-1zM374 450h1v1h-1zM371 451h1v1h-1zM375 451h1v1h-1zM371 452h1v1h-1zM375 452h1v1h-1zM371 453h1v1h-1zM375 453h1v1h-1zM371 454h1v1h-1zM375 454h1v1h-1zM371 455h1v1h-1zM375 455h1v1h-1zM371 456h1v1h-1zM375 456h1v1h-1zM371 457h1v1h-1zM375 457h1v1h-1zM372 458h1v1h-1zM373 458h1v1h-1zM374 458h1v1h-1zM381 458h1v1h-1zM388 450h1v1h-1zM389 450h1v1h-1zM390 450h1v1h-1zM387 451h1v1h-1zM391 451h1v1h-1zM387 452h1v1h-1zM391 452h1v1h-1zM387 453h1v1h-1zM391 453h1v1h-1zM387 454h1v1h-1zM391 454h1v1h-1zM387 455h1v1h-1zM391 455h1v1h-1zM387 456h1v1h-1zM391 456h1v1h-1zM387 457h1v1h-1zM391 457h1v1h-1zM388 458h1v1h-1zM389 458h1v1h-1zM390 458h1v1h-1zM396 450h1v1h-1zM397 450h1v1h-1zM398 450h1v1h-1zM395 451h1v1h-1zM399 451h1v1h-1zM395 452h1v1h-1zM399 452h1v1h-1zM395 453h1v1h-1zM399 453h1v1h-1zM395 454h1v1h-1zM399 454h1v1h-1zM395 455h1v1h-1zM399 455h1v1h-1zM395 456h1v1h-1zM399 456h1v1h-1zM395 457h1v1h-1zM399 457h1v1h-1zM396 458h1v1h-1zM397 458h1v1h-1zM398 458h1v1h-1zM404 450h1v1h-1zM405 450h1v1h-1zM406 450h1v1h-1zM403 451h1v1h-1zM407 451h1v1h-1zM403 452h1v1h-1zM407 452h1v1h-1zM403 453h1v1h-1zM407 453h1v1h-1zM403 454h1v1h-1zM407 454h1v1h-1zM403 455h1v1h-1zM407 455h1v1h-1zM403 456h1v1h-1zM407 456h1v1h-1zM403 457h1v1h-1zM407 457h1v1h-1zM404 458h1v1h-1zM405 458h1v1h-1zM406 458h1v1h-1zM372 518h1v1h-1zM373 518h1v1h-1zM374 518h1v1h-1zM371 519h1v1h-1zM375 519h1v1h-1zM371 520h1v1h-1zM375 520h1v1h-1zM371 521h1v1h-1zM375 521h1v1h-1zM371 522h1v1h-1zM375 522h1v1h-1zM371 523h1v1h-1zM375 523h1v1h-1zM371 524h1v1h-1zM375 524h1v1h-1zM371 525h1v1h-1zM375 525h1v1h-1zM372 526h1v1h-1zM373 526h1v1h-1zM374 526h1v1h-1zM381 526h1v1h-1zM388 518h1v1h-1zM389 518h1v1h-1zM390 518h1v1h-1zM387 519h1v1h-1zM391 519h1v1h-1zM387 520h1v1h-1zM391 520h1v1h-1zM387 521h1v1h-1zM391 521h1v1h-1zM387 522h1v1h-1zM391 522h1v1h-1zM387 523h1v1h-1zM391 523h1v1h-1zM387 524h1v1h-1zM391 524h1v1h-1zM387 525h1v1h-1zM391 525h1v1h-1zM388 526h1v1h-1zM389 526h1v1h-1zM390 526h1v1h-1zM396 518h1v1h-1zM397 518h1v1h-1zM398 518h1v1h-1zM395 519h1v1h-1zM399 519h1v1h-1zM395 520h1v1h-1zM399 520h1v1h-1zM395 521h1v1h-1zM399 521h1v1h-1zM395 522h1v1h-1zM399 522h1v1h-1zM395 523h1v1h-1zM399 523h1v1h-1zM395 524h1v1h-1zM399 524h1v1h-1zM395 525h1v1h-1zM399 525h1v1h-1zM396 526h1v1h-1zM397 526h1v1h-1zM398 526h1v1h-1zM404 518h1v1h-1zM405 518h1v1h-1zM406 518h1v1h-1zM403 519h1v1h-1zM407 519h1v1h-1zM403 520h1v1h-1zM407 520h1v1h-1zM403 521h1v1h-1zM407 521h1v1h-1zM403 522h1v1h-1zM407 522h1v1h-1zM403 523h1v1h-1zM407 523h1v1h-1zM403 524h1v1h-1zM407 524h1v1h-1zM403 525h1v1h-1zM407 525h1v1h-1zM404 526h1v1h-1zM405 526h1v1h-1zM406 526h1v1h-1zM412 526h1v1h-1zM412 527h1v1h-1zM412 528h1v1h-1zM412 529h1v1h-1zM412 530h1v1h-1zM412 531h1v1h-1zM412 532h1v1h-1zM412 533h1v1h-1zM412 534h1v1h-1zM413 534h1v1h-1zM414 534h1v1h-1zM419 526h1v1h-1zM420 526h1v1h-1zM421 526h1v1h-1zM418 527h1v1h-1zM422 527h1v1h-1zM418 528h1v1h-1zM422 528h1v1h-1zM418 529h1v1h-1zM422 529h1v1h-1zM418 530h1v1h-1zM422 530h1v1h-1zM418 531h1v1h-1zM422 531h1v1h-1zM418 532h1v1h-1zM422 532h1v1h-1zM418 533h1v1h-1zM422 533h1v1h-1zM419 534h1v1h-1zM420 534h1v1h-1zM421 534h1v1h-1zM428 529h1v1h-1zM428 534h1v1h-1zM434 526h1v1h-1zM435 526h1v1h-1zM436 526h1v1h-1zM437 526h1v1h-1zM438 526h1v1h-1zM434 527h1v1h-1zM434 528h1v1h-1zM434 529h1v1h-1zM434 530h1v1h-1zM435 530h1v1h-1zM436 530h1v1h-1zM437 530h1v1h-1zM438 531h1v1h-1zM438 532h1v1h-1zM434 533h1v1h-1zM438 533h1v1h-1zM435 534h1v1h-1zM436 534h1v1h-1zM437 534h1v1h-1zM443 526h1v1h-1zM444 526h1v1h-1zM445 526h1v1h-1zM442 527h1v1h-1zM446 527h1v1h-1zM446 528h1v1h-1zM445 529h1v1h-1zM444 530h1v1h-1zM443 531h1v1h-1zM442 532h1v1h-1zM442 533h1v1h-1zM442 534h1v1h-1zM443 534h1v1h-1zM444 534h1v1h-1zM445 534h1v1h-1zM446 534h1v1h-1zM452 529h1v1h-1zM452 534h1v1h-1zM459 526h1v1h-1zM460 526h1v1h-1zM461 526h1v1h-1zM458 527h1v1h-1zM462 527h1v1h-1zM458 528h1v1h-1zM462 528h1v1h-1zM458 529h1v1h-1zM462 529h1v1h-1zM458 530h1v1h-1zM462 530h1v1h-1zM458 531h1v1h-1zM462 531h1v1h-1zM458 532h1v1h-1zM462 532h1v1h-1zM458 533h1v1h-1zM462 533h1v1h-1zM459 534h1v1h-1zM460 534h1v1h-1zM461 534h1v1h-1zM467 526h1v1h-1zM468 526h1v1h-1zM469 526h1v1h-1zM466 527h1v1h-1zM470 527h1v1h-1zM466 528h1v1h-1zM470 528h1v1h-1zM466 529h1v1h-1zM470 529h1v1h-1zM466 530h1v1h-1zM470 530h1v1h-1zM466 531h1v1h-1zM470 531h1v1h-1zM466 532h1v1h-1zM470 532h1v1h-1zM466 533h1v1h-1zM470 533h1v1h-1zM467 534h1v1h-1zM468 534h1v1h-1zM469 534h1v1h-1zM413 540h1v1h-1zM412 541h1v1h-1zM413 541h1v1h-1zM412 542h1v1h-1zM413 542h1v1h-1zM413 543h1v1h-1zM413 544h1v1h-1zM413 545h1v1h-1zM412 546h1v1h-1zM413 546h1v1h-1zM414 546h1v1h-1zM413 547h1v1h-1zM412 548h1v1h-1zM413 548h1v1h-1zM414 548h1v1h-1zM423 541h1v1h-1zM422 542h1v1h-1zM421 543h1v1h-1zM420 544h1v1h-1zM419 545h1v1h-1zM418 546h1v1h-1zM417 547h1v1h-1zM428 540h1v1h-1zM426 541h1v1h-1zM427 541h1v1h-1zM428 541h1v1h-1zM428 542h1v1h-1zM428 543h1v1h-1zM428 544h1v1h-1zM428 545h1v1h-1zM428 546h1v1h-1zM428 547h1v1h-1zM426 548h1v1h-1zM427 548h1v1h-1zM428 548h1v1h-1zM429 548h1v1h-1zM430 548h1v1h-1zM436 540h1v1h-1zM437 540h1v1h-1zM435 541h1v1h-1zM434 542h1v1h-1zM434 543h1v1h-1zM434 544h1v1h-1zM435 544h1v1h-1zM436 544h1v1h-1zM437 544h1v1h-1zM434 545h1v1h-1zM438 545h1v1h-1zM434 546h1v1h-1zM438 546h1v1h-1zM434 547h1v1h-1zM438 547h1v1h-1zM435 548h1v1h-1zM436 548h1v1h-1zM437 548h1v1h-1zM447 541h1v1h-1zM446 542h1v1h-1zM445 543h1v1h-1zM444 544h1v1h-1zM443 545h1v1h-1zM442 546h1v1h-1zM441 547h1v1h-1zM451 540h1v1h-1zM452 540h1v1h-1zM453 540h1v1h-1zM450 541h1v1h-1zM454 541h1v1h-1zM454 542h1v1h-1zM453 543h1v1h-1zM452 544h1v1h-1zM451 545h1v1h-1zM450 546h1v1h-1zM450 547h1v1h-1zM450 548h1v1h-1zM451 548h1v1h-1zM452 548h1v1h-1zM453 548h1v1h-1zM454 548h1v1h-1zM459 540h1v1h-1zM460 540h1v1h-1zM461 540h1v1h-1zM458 541h1v1h-1zM462 541h1v1h-1zM458 542h1v1h-1zM462 542h1v1h-1zM458 543h1v1h-1zM462 543h1v1h-1zM458 544h1v1h-1zM462 544h1v1h-1zM458 545h1v1h-1zM462 545h1v1h-1zM458 546h1v1h-1zM462 546h1v1h-1zM458 547h1v1h-1zM462 547h1v1h-1zM459 548h1v1h-1zM460 548h1v1h-1zM461 548h1v1h-1zM468 540h1v1h-1zM466 541h1v1h-1zM467 541h1v1h-1zM468 541h1v1h-1zM468 542h1v1h-1zM468 543h1v1h-1zM468 544h1v1h-1zM468 545h1v1h-1zM468 546h1v1h-1zM468 547h1v1h-1zM466 548h1v1h-1zM467 548h1v1h-1zM468 548h1v1h-1zM469 548h1v1h-1zM470 548h1v1h-1zM475 540h1v1h-1zM476 540h1v1h-1zM477 540h1v1h-1zM474 541h1v1h-1zM478 541h1v1h-1zM474 542h1v1h-1zM478 542h1v1h-1zM474 543h1v1h-1zM478 543h1v1h-1zM475 544h1v1h-1zM476 544h1v1h-1zM477 544h1v1h-1zM474 545h1v1h-1zM478 545h1v1h-1zM474 546h1v1h-1zM478 546h1v1h-1zM474 547h1v1h-1zM478 547h1v1h-1zM475 548h1v1h-1zM476 548h1v1h-1zM477 548h1v1h-1zM535 526h1v1h-1zM533 527h1v1h-1zM534 527h1v1h-1zM535 527h1v1h-1zM535 528h1v1h-1zM535 529h1v1h-1zM535 530h1v1h-1zM535 531h1v1h-1zM535 532h1v1h-1zM535 533h1v1h-1zM533 534h1v1h-1zM534 534h1v1h-1zM535 534h1v1h-1zM536 534h1v1h-1zM537 534h1v1h-1zM542 526h1v1h-1zM543 526h1v1h-1zM544 526h1v1h-1zM541 527h1v1h-1zM545 527h1v1h-1zM541 528h1v1h-1zM545 528h1v1h-1zM541 529h1v1h-1zM545 529h1v1h-1zM541 530h1v1h-1zM545 530h1v1h-1zM541 531h1v1h-1zM545 531h1v1h-1zM541 532h1v1h-1zM545 532h1v1h-1zM541 533h1v1h-1zM545 533h1v1h-1zM542 534h1v1h-1zM543 534h1v1h-1zM544 534h1v1h-1zM551 529h1v1h-1zM551 534h1v1h-1zM557 526h1v1h-1zM558 526h1v1h-1zM559 526h1v1h-1zM560 526h1v1h-1zM561 526h1v1h-1zM557 527h1v1h-1zM557 528h1v1h-1zM557 529h1v1h-1zM557 530h1v1h-1zM558 530h1v1h-1zM559 530h1v1h-1zM560 530h1v1h-1zM561 531h1v1h-1zM561 532h1v1h-1zM557 533h1v1h-1zM561 533h1v1h-1zM558 534h1v1h-1zM559 534h1v1h-1zM560 534h1v1h-1zM566 526h1v1h-1zM567 526h1v1h-1zM568 526h1v1h-1zM565 527h1v1h-1zM569 527h1v1h-1zM569 528h1v1h-1zM569 529h1v1h-1zM567 530h1v1h-1zM568 530h1v1h-1zM569 531h1v1h-1zM569 532h1v1h-1zM565 533h1v1h-1zM569 533h1v1h-1zM566 534h1v1h-1zM567 534h1v1h-1zM568 534h1v1h-1zM575 529h1v1h-1zM575 534h1v1h-1zM582 526h1v1h-1zM583 526h1v1h-1zM584 526h1v1h-1zM581 527h1v1h-1zM585 527h1v1h-1zM581 528h1v1h-1zM585 528h1v1h-1zM581 529h1v1h-1zM585 529h1v1h-1zM581 530h1v1h-1zM585 530h1v1h-1zM581 531h1v1h-1zM585 531h1v1h-1zM581 532h1v1h-1zM585 532h1v1h-1zM581 533h1v1h-1zM585 533h1v1h-1zM582 534h1v1h-1zM583 534h1v1h-1zM584 534h1v1h-1zM590 526h1v1h-1zM591 526h1v1h-1zM592 526h1v1h-1zM589 527h1v1h-1zM593 527h1v1h-1zM589 528h1v1h-1zM593 528h1v1h-1zM589 529h1v1h-1zM593 529h1v1h-1zM589 530h1v1h-1zM593 530h1v1h-1zM589 531h1v1h-1zM593 531h1v1h-1zM589 532h1v1h-1zM593 532h1v1h-1zM589 533h1v1h-1zM593 533h1v1h-1zM590 534h1v1h-1zM591 534h1v1h-1zM592 534h1v1h-1zM526 540h1v1h-1zM527 540h1v1h-1zM528 540h1v1h-1zM525 541h1v1h-1zM529 541h1v1h-1zM525 542h1v1h-1zM529 542h1v1h-1zM525 543h1v1h-1zM529 543h1v1h-1zM525 544h1v1h-1zM529 544h1v1h-1zM525 545h1v1h-1zM529 545h1v1h-1zM525 546h1v1h-1zM529 546h1v1h-1zM525 547h1v1h-1zM529 547h1v1h-1zM526 548h1v1h-1zM527 548h1v1h-1zM528 548h1v1h-1zM536 540h1v1h-1zM535 541h1v1h-1zM536 541h1v1h-1zM535 542h1v1h-1zM536 542h1v1h-1zM534 543h1v1h-1zM536 543h1v1h-1zM534 544h1v1h-1zM536 544h1v1h-1zM533 545h1v1h-1zM536 545h1v1h-1zM533 546h1v1h-1zM534 546h1v1h-1zM535 546h1v1h-1zM536 546h1v1h-1zM537 546h1v1h-1zM536 547h1v1h-1zM535 548h1v1h-1zM536 548h1v1h-1zM537 548h1v1h-1zM546 541h1v1h-1zM545 542h1v1h-1zM544 543h1v1h-1zM543 544h1v1h-1zM542 545h1v1h-1zM541 546h1v1h-1zM540 547h1v1h-1zM551 540h1v1h-1zM549 541h1v1h-1zM550 541h1v1h-1zM551 541h1v1h-1zM551 542h1v1h-1zM551 543h1v1h-1zM551 544h1v1h-1zM551 545h1v1h-1zM551 546h1v1h-1zM551 547h1v1h-1zM549 548h1v1h-1zM550 548h1v1h-1zM551 548h1v1h-1zM552 548h1v1h-1zM553 548h1v1h-1zM559 540h1v1h-1zM560 540h1v1h-1zM558 541h1v1h-1zM557 542h1v1h-1zM557 543h1v1h-1zM557 544h1v1h-1zM558 544h1v1h-1zM559 544h1v1h-1zM560 544h1v1h-1zM557 545h1v1h-1zM561 545h1v1h-1zM557 546h1v1h-1zM561 546h1v1h-1zM557 547h1v1h-1zM561 547h1v1h-1zM558 548h1v1h-1zM559 548h1v1h-1zM560 548h1v1h-1zM570 541h1v1h-1zM569 542h1v1h-1zM568 543h1v1h-1zM567 544h1v1h-1zM566 545h1v1h-1zM565 546h1v1h-1zM564 547h1v1h-1zM574 540h1v1h-1zM575 540h1v1h-1zM576 540h1v1h-1zM573 541h1v1h-1zM577 541h1v1h-1zM577 542h1v1h-1zM576 543h1v1h-1zM575 544h1v1h-1zM574 545h1v1h-1zM573 546h1v1h-1zM573 547h1v1h-1zM573 548h1v1h-1zM574 548h1v1h-1zM575 548h1v1h-1zM576 548h1v1h-1zM577 548h1v1h-1zM582 540h1v1h-1zM583 540h1v1h-1zM584 540h1v1h-1zM581 541h1v1h-1zM585 541h1v1h-1zM581 542h1v1h-1zM585 542h1v1h-1zM581 543h1v1h-1zM585 543h1v1h-1zM581 544h1v1h-1zM585 544h1v1h-1zM581 545h1v1h-1zM585 545h1v1h-1zM581 546h1v1h-1zM585 546h1v1h-1zM581 547h1v1h-1zM585 547h1v1h-1zM582 548h1v1h-1zM583 548h1v1h-1zM584 548h1v1h-1zM591 540h1v1h-1zM589 541h1v1h-1zM590 541h1v1h-1zM591 541h1v1h-1zM591 542h1v1h-1zM591 543h1v1h-1zM591 544h1v1h-1zM591 545h1v1h-1zM591 546h1v1h-1zM591 547h1v1h-1zM589 548h1v1h-1zM590 548h1v1h-1zM591 548h1v1h-1zM592 548h1v1h-1zM593 548h1v1h-1zM598 540h1v1h-1zM599 540h1v1h-1zM600 540h1v1h-1zM597 541h1v1h-1zM601 541h1v1h-1zM597 542h1v1h-1zM601 542h1v1h-1zM597 543h1v1h-1zM601 543h1v1h-1zM598 544h1v1h-1zM599 544h1v1h-1zM600 544h1v1h-1zM597 545h1v1h-1zM601 545h1v1h-1zM597 546h1v1h-1zM601 546h1v1h-1zM597 547h1v1h-1zM601 547h1v1h-1zM598 548h1v1h-1zM599 548h1v1h-1zM600 548h1v1h-1zM658 526h1v1h-1zM656 527h1v1h-1zM657 527h1v1h-1zM658 527h1v1h-1zM658 528h1v1h-1zM658 529h1v1h-1zM658 530h1v1h-1zM658 531h1v1h-1zM658 532h1v1h-1zM658 533h1v1h-1zM656 534h1v1h-1zM657 534h1v1h-1zM658 534h1v1h-1zM659 534h1v1h-1zM660 534h1v1h-1zM665 526h1v1h-1zM666 526h1v1h-1zM667 526h1v1h-1zM664 527h1v1h-1zM668 527h1v1h-1zM664 528h1v1h-1zM668 528h1v1h-1zM664 529h1v1h-1zM668 529h1v1h-1zM664 530h1v1h-1zM668 530h1v1h-1zM664 531h1v1h-1zM668 531h1v1h-1zM664 532h1v1h-1zM668 532h1v1h-1zM664 533h1v1h-1zM668 533h1v1h-1zM665 534h1v1h-1zM666 534h1v1h-1zM667 534h1v1h-1zM674 529h1v1h-1zM674 534h1v1h-1zM680 526h1v1h-1zM681 526h1v1h-1zM682 526h1v1h-1zM683 526h1v1h-1zM684 526h1v1h-1zM680 527h1v1h-1zM680 528h1v1h-1zM680 529h1v1h-1zM680 530h1v1h-1zM681 530h1v1h-1zM682 530h1v1h-1zM683 530h1v1h-1zM684 531h1v1h-1zM684 532h1v1h-1zM680 533h1v1h-1zM684 533h1v1h-1zM681 534h1v1h-1zM682 534h1v1h-1zM683 534h1v1h-1zM691 526h1v1h-1zM690 527h1v1h-1zM691 527h1v1h-1zM690 528h1v1h-1zM691 528h1v1h-1zM689 529h1v1h-1zM691 529h1v1h-1zM689 530h1v1h-1zM691 530h1v1h-1zM688 531h1v1h-1zM691 531h1v1h-1zM688 532h1v1h-1zM689 532h1v1h-1zM690 532h1v1h-1zM691 532h1v1h-1zM692 532h1v1h-1zM691 533h1v1h-1zM690 534h1v1h-1zM691 534h1v1h-1zM692 534h1v1h-1zM698 529h1v1h-1zM698 534h1v1h-1zM705 526h1v1h-1zM706 526h1v1h-1zM707 526h1v1h-1zM704 527h1v1h-1zM708 527h1v1h-1zM704 528h1v1h-1zM708 528h1v1h-1zM704 529h1v1h-1zM708 529h1v1h-1zM704 530h1v1h-1zM708 530h1v1h-1zM704 531h1v1h-1zM708 531h1v1h-1zM704 532h1v1h-1zM708 532h1v1h-1zM704 533h1v1h-1zM708 533h1v1h-1zM705 534h1v1h-1zM706 534h1v1h-1zM707 534h1v1h-1zM713 526h1v1h-1zM714 526h1v1h-1zM715 526h1v1h-1zM712 527h1v1h-1zM716 527h1v1h-1zM712 528h1v1h-1zM716 528h1v1h-1zM712 529h1v1h-1zM716 529h1v1h-1zM712 530h1v1h-1zM716 530h1v1h-1zM712 531h1v1h-1zM716 531h1v1h-1zM712 532h1v1h-1zM716 532h1v1h-1zM712 533h1v1h-1zM716 533h1v1h-1zM713 534h1v1h-1zM714 534h1v1h-1zM715 534h1v1h-1zM649 540h1v1h-1zM650 540h1v1h-1zM651 540h1v1h-1zM648 541h1v1h-1zM652 541h1v1h-1zM648 542h1v1h-1zM652 542h1v1h-1zM648 543h1v1h-1zM652 543h1v1h-1zM648 544h1v1h-1zM652 544h1v1h-1zM648 545h1v1h-1zM652 545h1v1h-1zM648 546h1v1h-1zM652 546h1v1h-1zM648 547h1v1h-1zM652 547h1v1h-1zM649 548h1v1h-1zM650 548h1v1h-1zM651 548h1v1h-1zM659 540h1v1h-1zM658 541h1v1h-1zM659 541h1v1h-1zM658 542h1v1h-1zM659 542h1v1h-1zM657 543h1v1h-1zM659 543h1v1h-1zM657 544h1v1h-1zM659 544h1v1h-1zM656 545h1v1h-1zM659 545h1v1h-1zM656 546h1v1h-1zM657 546h1v1h-1zM658 546h1v1h-1zM659 546h1v1h-1zM660 546h1v1h-1zM659 547h1v1h-1zM658 548h1v1h-1zM659 548h1v1h-1zM660 548h1v1h-1zM669 541h1v1h-1zM668 542h1v1h-1zM667 543h1v1h-1zM666 544h1v1h-1zM665 545h1v1h-1zM664 546h1v1h-1zM663 547h1v1h-1zM674 540h1v1h-1zM672 541h1v1h-1zM673 541h1v1h-1zM674 541h1v1h-1zM674 542h1v1h-1zM674 543h1v1h-1zM674 544h1v1h-1zM674 545h1v1h-1zM674 546h1v1h-1zM674 547h1v1h-1zM672 548h1v1h-1zM673 548h1v1h-1zM674 548h1v1h-1zM675 548h1v1h-1zM676 548h1v1h-1zM682 540h1v1h-1zM683 540h1v1h-1zM681 541h1v1h-1zM680 542h1v1h-1zM680 543h1v1h-1zM680 544h1v1h-1zM681 544h1v1h-1zM682 544h1v1h-1zM683 544h1v1h-1zM680 545h1v1h-1zM684 545h1v1h-1zM680 546h1v1h-1zM684 546h1v1h-1zM680 547h1v1h-1zM684 547h1v1h-1zM681 548h1v1h-1zM682 548h1v1h-1zM683 548h1v1h-1zM693 541h1v1h-1zM692 542h1v1h-1zM691 543h1v1h-1zM690 544h1v1h-1zM689 545h1v1h-1zM688 546h1v1h-1zM687 547h1v1h-1zM697 540h1v1h-1zM698 540h1v1h-1zM699 540h1v1h-1zM696 541h1v1h-1zM700 541h1v1h-1zM700 542h1v1h-1zM699 543h1v1h-1zM698 544h1v1h-1zM697 545h1v1h-1zM696 546h1v1h-1zM696 547h1v1h-1zM696 548h1v1h-1zM697 548h1v1h-1zM698 548h1v1h-1zM699 548h1v1h-1zM700 548h1v1h-1zM705 540h1v1h-1zM706 540h1v1h-1zM707 540h1v1h-1zM704 541h1v1h-1zM708 541h1v1h-1zM704 542h1v1h-1zM708 542h1v1h-1zM704 543h1v1h-1zM708 543h1v1h-1zM704 544h1v1h-1zM708 544h1v1h-1zM704 545h1v1h-1zM708 545h1v1h-1zM704 546h1v1h-1zM708 546h1v1h-1zM704 547h1v1h-1zM708 547h1v1h-1zM705 548h1v1h-1zM706 548h1v1h-1zM707 548h1v1h-1zM714 540h1v1h-1zM712 541h1v1h-1zM713 541h1v1h-1zM714 541h1v1h-1zM714 542h1v1h-1zM714 543h1v1h-1zM714 544h1v1h-1zM714 545h1v1h-1zM714 546h1v1h-1zM714 547h1v1h-1zM712 548h1v1h-1zM713 548h1v1h-1zM714 548h1v1h-1zM715 548h1v1h-1zM716 548h1v1h-1zM721 540h1v1h-1zM722 540h1v1h-1zM723 540h1v1h-1zM720 541h1v1h-1zM724 541h1v1h-1zM720 542h1v1h-1zM724 542h1v1h-1zM720 543h1v1h-1zM724 543h1v1h-1zM721 544h1v1h-1zM722 544h1v1h-1zM723 544h1v1h-1zM720 545h1v1h-1zM724 545h1v1h-1zM720 546h1v1h-1zM724 546h1v1h-1zM720 547h1v1h-1zM724 547h1v1h-1zM721 548h1v1h-1zM722 548h1v1h-1zM723 548h1v1h-1zM780 526h1v1h-1zM778 527h1v1h-1zM779 527h1v1h-1zM780 527h1v1h-1zM780 528h1v1h-1zM780 529h1v1h-1zM780 530h1v1h-1zM780 531h1v1h-1zM780 532h1v1h-1zM780 533h1v1h-1zM778 534h1v1h-1zM779 534h1v1h-1zM780 534h1v1h-1zM781 534h1v1h-1zM782 534h1v1h-1zM787 526h1v1h-1zM788 526h1v1h-1zM789 526h1v1h-1zM786 527h1v1h-1zM790 527h1v1h-1zM786 528h1v1h-1zM790 528h1v1h-1zM786 529h1v1h-1zM790 529h1v1h-1zM786 530h1v1h-1zM790 530h1v1h-1zM786 531h1v1h-1zM790 531h1v1h-1zM786 532h1v1h-1zM790 532h1v1h-1zM786 533h1v1h-1zM790 533h1v1h-1zM787 534h1v1h-1zM788 534h1v1h-1zM789 534h1v1h-1zM796 529h1v1h-1zM796 534h1v1h-1zM802 526h1v1h-1zM803 526h1v1h-1zM804 526h1v1h-1zM805 526h1v1h-1zM806 526h1v1h-1zM802 527h1v1h-1zM802 528h1v1h-1zM802 529h1v1h-1zM802 530h1v1h-1zM803 530h1v1h-1zM804 530h1v1h-1zM805 530h1v1h-1zM806 531h1v1h-1zM806 532h1v1h-1zM802 533h1v1h-1zM806 533h1v1h-1zM803 534h1v1h-1zM804 534h1v1h-1zM805 534h1v1h-1zM810 526h1v1h-1zM811 526h1v1h-1zM812 526h1v1h-1zM813 526h1v1h-1zM814 526h1v1h-1zM810 527h1v1h-1zM810 528h1v1h-1zM810 529h1v1h-1zM810 530h1v1h-1zM811 530h1v1h-1zM812 530h1v1h-1zM813 530h1v1h-1zM814 531h1v1h-1zM814 532h1v1h-1zM810 533h1v1h-1zM814 533h1v1h-1zM811 534h1v1h-1zM812 534h1v1h-1zM813 534h1v1h-1zM820 529h1v1h-1zM820 534h1v1h-1zM827 526h1v1h-1zM828 526h1v1h-1zM829 526h1v1h-1zM826 527h1v1h-1zM830 527h1v1h-1zM826 528h1v1h-1zM830 528h1v1h-1zM826 529h1v1h-1zM830 529h1v1h-1zM826 530h1v1h-1zM830 530h1v1h-1zM826 531h1v1h-1zM830 531h1v1h-1zM826 532h1v1h-1zM830 532h1v1h-1zM826 533h1v1h-1zM830 533h1v1h-1zM827 534h1v1h-1zM828 534h1v1h-1zM829 534h1v1h-1zM835 526h1v1h-1zM836 526h1v1h-1zM837 526h1v1h-1zM834 527h1v1h-1zM838 527h1v1h-1zM834 528h1v1h-1zM838 528h1v1h-1zM834 529h1v1h-1zM838 529h1v1h-1zM834 530h1v1h-1zM838 530h1v1h-1zM834 531h1v1h-1zM838 531h1v1h-1zM834 532h1v1h-1zM838 532h1v1h-1zM834 533h1v1h-1zM838 533h1v1h-1zM835 534h1v1h-1zM836 534h1v1h-1zM837 534h1v1h-1zM771 540h1v1h-1zM772 540h1v1h-1zM773 540h1v1h-1zM770 541h1v1h-1zM774 541h1v1h-1zM770 542h1v1h-1zM774 542h1v1h-1zM770 543h1v1h-1zM774 543h1v1h-1zM770 544h1v1h-1zM774 544h1v1h-1zM770 545h1v1h-1zM774 545h1v1h-1zM770 546h1v1h-1zM774 546h1v1h-1zM770 547h1v1h-1zM774 547h1v1h-1zM771 548h1v1h-1zM772 548h1v1h-1zM773 548h1v1h-1zM781 540h1v1h-1zM780 541h1v1h-1zM781 541h1v1h-1zM780 542h1v1h-1zM781 542h1v1h-1zM779 543h1v1h-1zM781 543h1v1h-1zM779 544h1v1h-1zM781 544h1v1h-1zM778 545h1v1h-1zM781 545h1v1h-1zM778 546h1v1h-1zM779 546h1v1h-1zM780 546h1v1h-1zM781 546h1v1h-1zM782 546h1v1h-1zM781 547h1v1h-1zM780 548h1v1h-1zM781 548h1v1h-1zM782 548h1v1h-1zM791 541h1v1h-1zM790 542h1v1h-1zM789 543h1v1h-1zM788 544h1v1h-1zM787 545h1v1h-1zM786 546h1v1h-1zM785 547h1v1h-1zM796 540h1v1h-1zM794 541h1v1h-1zM795 541h1v1h-1zM796 541h1v1h-1zM796 542h1v1h-1zM796 543h1v1h-1zM796 544h1v1h-1zM796 545h1v1h-1zM796 546h1v1h-1zM796 547h1v1h-1zM794 548h1v1h-1zM795 548h1v1h-1zM796 548h1v1h-1zM797 548h1v1h-1zM798 548h1v1h-1zM804 540h1v1h-1zM805 540h1v1h-1zM803 541h1v1h-1zM802 542h1v1h-1zM802 543h1v1h-1zM802 544h1v1h-1zM803 544h1v1h-1zM804 544h1v1h-1zM805 544h1v1h-1zM802 545h1v1h-1zM806 545h1v1h-1zM802 546h1v1h-1zM806 546h1v1h-1zM802 547h1v1h-1zM806 547h1v1h-1zM803 548h1v1h-1zM804 548h1v1h-1zM805 548h1v1h-1zM815 541h1v1h-1zM814 542h1v1h-1zM813 543h1v1h-1zM812 544h1v1h-1zM811 545h1v1h-1zM810 546h1v1h-1zM809 547h1v1h-1zM819 540h1v1h-1zM820 540h1v1h-1zM821 540h1v1h-1zM818 541h1v1h-1zM822 541h1v1h-1zM822 542h1v1h-1zM821 543h1v1h-1zM820 544h1v1h-1zM819 545h1v1h-1zM818 546h1v1h-1zM818 547h1v1h-1zM818 548h1v1h-1zM819 548h1v1h-1zM820 548h1v1h-1zM821 548h1v1h-1zM822 548h1v1h-1zM827 540h1v1h-1zM828 540h1v1h-1zM829 540h1v1h-1zM826 541h1v1h-1zM830 541h1v1h-1zM826 542h1v1h-1zM830 542h1v1h-1zM826 543h1v1h-1zM830 543h1v1h-1zM826 544h1v1h-1zM830 544h1v1h-1zM826 545h1v1h-1zM830 545h1v1h-1zM826 546h1v1h-1zM830 546h1v1h-1zM826 547h1v1h-1zM830 547h1v1h-1zM827 548h1v1h-1zM828 548h1v1h-1zM829 548h1v1h-1zM836 540h1v1h-1zM834 541h1v1h-1zM835 541h1v1h-1zM836 541h1v1h-1zM836 542h1v1h-1zM836 543h1v1h-1zM836 544h1v1h-1zM836 545h1v1h-1zM836 546h1v1h-1zM836 547h1v1h-1zM834 548h1v1h-1zM835 548h1v1h-1zM836 548h1v1h-1zM837 548h1v1h-1zM838 548h1v1h-1zM843 540h1v1h-1zM844 540h1v1h-1zM845 540h1v1h-1zM842 541h1v1h-1zM846 541h1v1h-1zM842 542h1v1h-1zM846 542h1v1h-1zM842 543h1v1h-1zM846 543h1v1h-1zM843 544h1v1h-1zM844 544h1v1h-1zM845 544h1v1h-1zM842 545h1v1h-1zM846 545h1v1h-1zM842 546h1v1h-1zM846 546h1v1h-1zM842 547h1v1h-1zM846 547h1v1h-1zM843 548h1v1h-1zM844 548h1v1h-1zM845 548h1v1h-1zM903 526h1v1h-1zM901 527h1v1h-1zM902 527h1v1h-1zM903 527h1v1h-1zM903 528h1v1h-1zM903 529h1v1h-1zM903 530h1v1h-1zM903 531h1v1h-1zM903 532h1v1h-1zM903 533h1v1h-1zM901 534h1v1h-1zM902 534h1v1h-1zM903 534h1v1h-1zM904 534h1v1h-1zM905 534h1v1h-1zM910 526h1v1h-1zM911 526h1v1h-1zM912 526h1v1h-1zM909 527h1v1h-1zM913 527h1v1h-1zM909 528h1v1h-1zM913 528h1v1h-1zM909 529h1v1h-1zM913 529h1v1h-1zM909 530h1v1h-1zM913 530h1v1h-1zM909 531h1v1h-1zM913 531h1v1h-1zM909 532h1v1h-1zM913 532h1v1h-1zM909 533h1v1h-1zM913 533h1v1h-1zM910 534h1v1h-1zM911 534h1v1h-1zM912 534h1v1h-1zM919 529h1v1h-1zM919 534h1v1h-1zM925 526h1v1h-1zM926 526h1v1h-1zM927 526h1v1h-1zM928 526h1v1h-1zM929 526h1v1h-1zM925 527h1v1h-1zM925 528h1v1h-1zM925 529h1v1h-1zM925 530h1v1h-1zM926 530h1v1h-1zM927 530h1v1h-1zM928 530h1v1h-1zM929 531h1v1h-1zM929 532h1v1h-1zM925 533h1v1h-1zM929 533h1v1h-1zM926 534h1v1h-1zM927 534h1v1h-1zM928 534h1v1h-1zM935 526h1v1h-1zM936 526h1v1h-1zM934 527h1v1h-1zM933 528h1v1h-1zM933 529h1v1h-1zM933 530h1v1h-1zM934 530h1v1h-1zM935 530h1v1h-1zM936 530h1v1h-1zM933 531h1v1h-1zM937 531h1v1h-1zM933 532h1v1h-1zM937 532h1v1h-1zM933 533h1v1h-1zM937 533h1v1h-1zM934 534h1v1h-1zM935 534h1v1h-1zM936 534h1v1h-1zM943 529h1v1h-1zM943 534h1v1h-1zM950 526h1v1h-1zM951 526h1v1h-1zM952 526h1v1h-1zM949 527h1v1h-1zM953 527h1v1h-1zM949 528h1v1h-1zM953 528h1v1h-1zM949 529h1v1h-1zM953 529h1v1h-1zM949 530h1v1h-1zM953 530h1v1h-1zM949 531h1v1h-1zM953 531h1v1h-1zM949 532h1v1h-1zM953 532h1v1h-1zM949 533h1v1h-1zM953 533h1v1h-1zM950 534h1v1h-1zM951 534h1v1h-1zM952 534h1v1h-1zM958 526h1v1h-1zM959 526h1v1h-1zM960 526h1v1h-1zM957 527h1v1h-1zM961 527h1v1h-1zM957 528h1v1h-1zM961 528h1v1h-1zM957 529h1v1h-1zM961 529h1v1h-1zM957 530h1v1h-1zM961 530h1v1h-1zM957 531h1v1h-1zM961 531h1v1h-1zM957 532h1v1h-1zM961 532h1v1h-1zM957 533h1v1h-1zM961 533h1v1h-1zM958 534h1v1h-1zM959 534h1v1h-1zM960 534h1v1h-1zM894 540h1v1h-1zM895 540h1v1h-1zM896 540h1v1h-1zM893 541h1v1h-1zM897 541h1v1h-1zM893 542h1v1h-1zM897 542h1v1h-1zM893 543h1v1h-1zM897 543h1v1h-1zM893 544h1v1h-1zM897 544h1v1h-1zM893 545h1v1h-1zM897 545h1v1h-1zM893 546h1v1h-1zM897 546h1v1h-1zM893 547h1v1h-1zM897 547h1v1h-1zM894 548h1v1h-1zM895 548h1v1h-1zM896 548h1v1h-1zM904 540h1v1h-1zM903 541h1v1h-1zM904 541h1v1h-1zM903 542h1v1h-1zM904 542h1v1h-1zM902 543h1v1h-1zM904 543h1v1h-1zM902 544h1v1h-1zM904 544h1v1h-1zM901 545h1v1h-1zM904 545h1v1h-1zM901 546h1v1h-1zM902 546h1v1h-1zM903 546h1v1h-1zM904 546h1v1h-1zM905 546h1v1h-1zM904 547h1v1h-1zM903 548h1v1h-1zM904 548h1v1h-1zM905 548h1v1h-1zM914 541h1v1h-1zM913 542h1v1h-1zM912 543h1v1h-1zM911 544h1v1h-1zM910 545h1v1h-1zM909 546h1v1h-1zM908 547h1v1h-1zM919 540h1v1h-1zM917 541h1v1h-1zM918 541h1v1h-1zM919 541h1v1h-1zM919 542h1v1h-1zM919 543h1v1h-1zM919 544h1v1h-1zM919 545h1v1h-1zM919 546h1v1h-1zM919 547h1v1h-1zM917 548h1v1h-1zM918 548h1v1h-1zM919 548h1v1h-1zM920 548h1v1h-1zM921 548h1v1h-1zM927 540h1v1h-1zM928 540h1v1h-1zM926 541h1v1h-1zM925 542h1v1h-1zM925 543h1v1h-1zM925 544h1v1h-1zM926 544h1v1h-1zM927 544h1v1h-1zM928 544h1v1h-1zM925 545h1v1h-1zM929 545h1v1h-1zM925 546h1v1h-1zM929 546h1v1h-1zM925 547h1v1h-1zM929 547h1v1h-1zM926 548h1v1h-1zM927 548h1v1h-1zM928 548h1v1h-1zM938 541h1v1h-1zM937 542h1v1h-1zM936 543h1v1h-1zM935 544h1v1h-1zM934 545h1v1h-1zM933 546h1v1h-1zM932 547h1v1h-1zM942 540h1v1h-1zM943 540h1v1h-1zM944 540h1v1h-1zM941 541h1v1h-1zM945 541h1v1h-1zM945 542h1v1h-1zM944 543h1v1h-1zM943 544h1v1h-1zM942 545h1v1h-1zM941 546h1v1h-1zM941 547h1v1h-1zM941 548h1v1h-1zM942 548h1v1h-1zM943 548h1v1h-1zM944 548h1v1h-1zM945 548h1v1h-1zM950 540h1v1h-1zM951 540h1v1h-1zM952 540h1v1h-1zM949 541h1v1h-1zM953 541h1v1h-1zM949 542h1v1h-1zM953 542h1v1h-1zM949 543h1v1h-1zM953 543h1v1h-1zM949 544h1v1h-1zM953 544h1v1h-1zM949 545h1v1h-1zM953 545h1v1h-1zM949 546h1v1h-1zM953 546h1v1h-1zM949 547h1v1h-1zM953 547h1v1h-1zM950 548h1v1h-1zM951 548h1v1h-1zM952 548h1v1h-1zM959 540h1v1h-1zM957 541h1v1h-1zM958 541h1v1h-1zM959 541h1v1h-1zM959 542h1v1h-1zM959 543h1v1h-1zM959 544h1v1h-1zM959 545h1v1h-1zM959 546h1v1h-1zM959 547h1v1h-1zM957 548h1v1h-1zM958 548h1v1h-1zM959 548h1v1h-1zM960 548h1v1h-1zM961 548h1v1h-1zM966 540h1v1h-1zM967 540h1v1h-1zM968 540h1v1h-1zM965 541h1v1h-1zM969 541h1v1h-1zM965 542h1v1h-1zM969 542h1v1h-1zM965 543h1v1h-1zM969 543h1v1h-1zM966 544h1v1h-1zM967 544h1v1h-1zM968 544h1v1h-1zM965 545h1v1h-1zM969 545h1v1h-1zM965 546h1v1h-1zM969 546h1v1h-1zM965 547h1v1h-1zM969 547h1v1h-1zM966 548h1v1h-1zM967 548h1v1h-1zM968 548h1v1h-1zM1023 527h1v1h-1zM1023 534h1v1h-1zM1016 540h1v1h-1zM1017 540h1v1h-1zM1018 540h1v1h-1zM1015 541h1v1h-1zM1019 541h1v1h-1zM1015 542h1v1h-1zM1019 542h1v1h-1zM1015 543h1v1h-1zM1019 543h1v1h-1zM1015 544h1v1h-1zM1019 544h1v1h-1zM1015 545h1v1h-1zM1019 545h1v1h-1zM1015 546h1v1h-1zM1019 546h1v1h-1zM1015 547h1v1h-1zM1019 547h1v1h-1zM1016 548h1v1h-1zM1017 548h1v1h-1zM1018 548h1v1h-1zM1023 545h1v1h-1zM1023 546h1v1h-1z" fill="#d8d8d8"/></svg>
<div class="r" style="left:321px;top:553px;width:26px;height:22px;border:1px solid #f4f4f4;background:#d2d2d2"></div>
<svg class="r" style="left:321px;top:553px" width="28" height="24" viewBox="0 0 28 24"><path d="M7 7h2v9H7z M15.5 7v9l-5.5-4.5z M22 7v9l-5.5-4.5z" fill="#6a6a6a"/></svg>
<div class="r" style="left:350px;top:553px;width:26px;height:22px;border:1px solid #f4f4f4;background:#d2d2d2"></div>
<svg class="r" style="left:350px;top:553px" width="28" height="24" viewBox="0 0 28 24"><path d="M13.5 7v9l-5.5-4.5z M19.5 7v9l-5.5-4.5z" fill="#6a6a6a"/></svg>
<div class="r" style="left:379px;top:553px;width:26px;height:22px;border:1px solid #f4f4f4;background:#d2d2d2"></div>
<svg class="r" style="left:379px;top:553px" width="28" height="24" viewBox="0 0 28 24"><path d="M17.5 7v9l-5.5-4.5z" fill="#6a6a6a"/></svg>
<div class="r" style="left:408px;top:553px;width:26px;height:22px;border:1px solid #f4f4f4;background:#d2d2d2"></div>
<svg class="r" style="left:408px;top:553px" width="28" height="24" viewBox="0 0 28 24"><path d="M12 7v9l5.5-4.5z" fill="#6a6a6a"/></svg>
<div class="r" style="left:437px;top:553px;width:26px;height:22px;border:1px solid #f4f4f4;background:#d2d2d2"></div>
<svg class="r" style="left:437px;top:553px" width="28" height="24" viewBox="0 0 28 24"><path d="M9 7v9l5.5-4.5z M15 7v9l5.5-4.5z" fill="#6a6a6a"/></svg>
<div class="r" style="left:466px;top:553px;width:26px;height:22px;border:1px solid #f4f4f4;background:#d2d2d2"></div>
<svg class="r" style="left:466px;top:553px" width="28" height="24" viewBox="0 0 28 24"><path d="M7 7v9l5.5-4.5z M13 7v9l5.5-4.5z M19 7h2v9h-2z" fill="#6a6a6a"/></svg>
<div class="r" style="left:501px;top:553px;width:26px;height:22px;border:1px solid #f4f4f4;background:#d2d2d2"></div>
<svg class="r" style="left:501px;top:553px" width="28" height="24" viewBox="0 0 28 24"><circle cx="13" cy="9" r="5.4" fill="#d6d6d6" stroke="#5a5a5a" stroke-width="1.3"/><path d="M10.5 9h5M13 6.5v5" stroke="#555" stroke-width="2"/><path d="M18.2 13.2l4.3 4.3" stroke="#3a3a6a" stroke-width="3.6"/><path d="M18.2 13.2l4.3 4.3" stroke="#6c64d4" stroke-width="2.6"/><path d="M5 20.5h18M5.5 18v2.5M8.5 18v2.5M11.5 18v2.5M14.5 18v2.5M17.5 18v2.5M20.5 18v2.5" stroke="#5a5a5a" stroke-width="1"/></svg>
<div class="r" style="left:530px;top:553px;width:26px;height:22px;border:1px solid #f2f2f2;background:#f2f2f2"></div>
<div class="r" style="left:531px;top:554px;width:24px;height:20px;border:1px solid #1f5a98;background:#cce4f7"></div>
<div class="r" style="left:532px;top:555px;width:22px;height:18px;border:1px solid #8ab4dc;background:#cce4f7"></div>
<svg class="r" style="left:530px;top:553px" width="28" height="24" viewBox="0 0 28 24"><circle cx="13" cy="9" r="5.4" fill="#d4dde4" stroke="#5a5a5a" stroke-width="1.3"/><path d="M18.2 13.2l4.3 4.3" stroke="#3a3a6a" stroke-width="3.6"/><path d="M18.2 13.2l4.3 4.3" stroke="#6c64d4" stroke-width="2.6"/><path d="M5 20.5h18M5.5 18v2.5M8.5 18v2.5M11.5 18v2.5M14.5 18v2.5M17.5 18v2.5M20.5 18v2.5" stroke="#5a5a5a" stroke-width="1"/></svg>
<div class="r" style="left:559px;top:553px;width:26px;height:22px;border:1px solid #f4f4f4;background:#d2d2d2"></div>
<svg class="r" style="left:559px;top:553px" width="28" height="24" viewBox="0 0 28 24"><circle cx="13" cy="9" r="5.4" fill="#d6d6d6" stroke="#5a5a5a" stroke-width="1.3"/><path d="M10.5 9h5" stroke="#555" stroke-width="2"/><path d="M18.2 13.2l4.3 4.3" stroke="#3a3a6a" stroke-width="3.6"/><path d="M18.2 13.2l4.3 4.3" stroke="#6c64d4" stroke-width="2.6"/><path d="M5 20.5h18M5.5 18v2.5M8.5 18v2.5M11.5 18v2.5M14.5 18v2.5M17.5 18v2.5M20.5 18v2.5" stroke="#5a5a5a" stroke-width="1"/></svg>
<div class="r" style="left:594px;top:553px;width:26px;height:22px;border:1px solid #f4f4f4;background:#d8d8d8"></div>
<div class="r" style="left:595px;top:554px;width:24px;height:20px;border:1px solid #a8a8a8"></div>
<svg class="r" style="left:594px;top:553px" width="28" height="24" viewBox="0 0 28 24"><path d="M6 3v17.5M6 3.5h2M6 6.5h2M6 9.5h2M6 12.5h2M6 15.5h2M6 18.5h2M6 20h2" stroke="#000" stroke-width="1.2"/><circle cx="13" cy="9" r="5.5" fill="#cfd6d6" stroke="#000" stroke-width="1.6"/><path d="M16.8 12.5l5 5.2" stroke="#000a90" stroke-width="3"/></svg>
<div class="r" style="left:623px;top:553px;width:337px;height:22px;border:1px solid #efefef;background:#e1e1e1"></div>
<div class="r" style="left:627px;top:558px;width:24px;height:14px;background:#2b2b2b;"></div>
<div class="r" style="left:627px;top:564px;width:24px;height:2px;background:#ee1010;"></div>
<svg class="r" style="left:627px;top:558px" width="24" height="14"><circle cx="12" cy="7" r="2.6" fill="#ee1010"/></svg>
<div class="t" style="left:655.27px;top:560.95px;font-size:11.277px;line-height:11.277px;color:#000;font-weight:normal;font-family:'Liberation Sans', sans-serif;letter-spacing:0.0px;transform:scaleY(1.1342);transform-origin:0 9.548px;">Discharge Pressure</div>
<svg class="r" style="left:947px;top:561px" width="12" height="9"><path d="M1.5 2l4.3 4.3 4.3-4.3" fill="none" stroke="#505050" stroke-width="1.2"/></svg>
<div class="r" style="left:969px;top:553px;width:26px;height:22px;border:1px solid #f4f4f4;background:#dcdcdc"></div>
<div class="r" style="left:970px;top:554px;width:24px;height:20px;border:1px solid #a8a8a8"></div>
<svg class="r" style="left:969px;top:553px" width="28" height="24" viewBox="0 0 28 24"><path d="M7 4v16M7 19.5h15M7 4.5h1.5M7 7.5h1.5M7 10.5h1.5M7 13.5h1.5M7 16.5h1.5M10 18v1.5M13 18v1.5M16 18v1.5M19 18v1.5M22 18v1.5" stroke="#000" stroke-width="1.5"/><path d="M9.5 7.5h5l1 1.2h5.5v6.5H9.5z" fill="#f4f24a" stroke="#000" stroke-width="1"/><path d="M9.5 8.8h11.5" stroke="#000" stroke-width="0.8"/></svg>
<div class="r" style="left:998px;top:553px;width:26px;height:22px;border:1px solid #f2f2f2;background:#f2f2f2"></div>
<div class="r" style="left:999px;top:554px;width:24px;height:20px;border:1px solid #1f5a98;background:#cce4f7"></div>
<div class="r" style="left:1000px;top:555px;width:22px;height:18px;border:1px solid #8ab4dc;background:#cce4f7"></div>
<svg class="r" style="left:998px;top:553px" width="28" height="24" viewBox="0 0 28 24"><path d="M7 4v16M7 19.5h15M7 4.5h1.5M7 7.5h1.5M7 10.5h1.5M7 13.5h1.5M7 16.5h1.5M10 18v1.5M13 18v1.5M16 18v1.5M19 18v1.5M22 18v1.5" stroke="#000" stroke-width="1.5"/><circle cx="15.5" cy="10.5" r="6" fill="#f6f6f6" stroke="#000" stroke-width="1.3"/><path d="M15.5 6.5v4.5h3.5" fill="none" stroke="#000" stroke-width="1.4"/><path d="M12 14.5h7" stroke="#888" stroke-width="1.5"/></svg>
</body></html>
